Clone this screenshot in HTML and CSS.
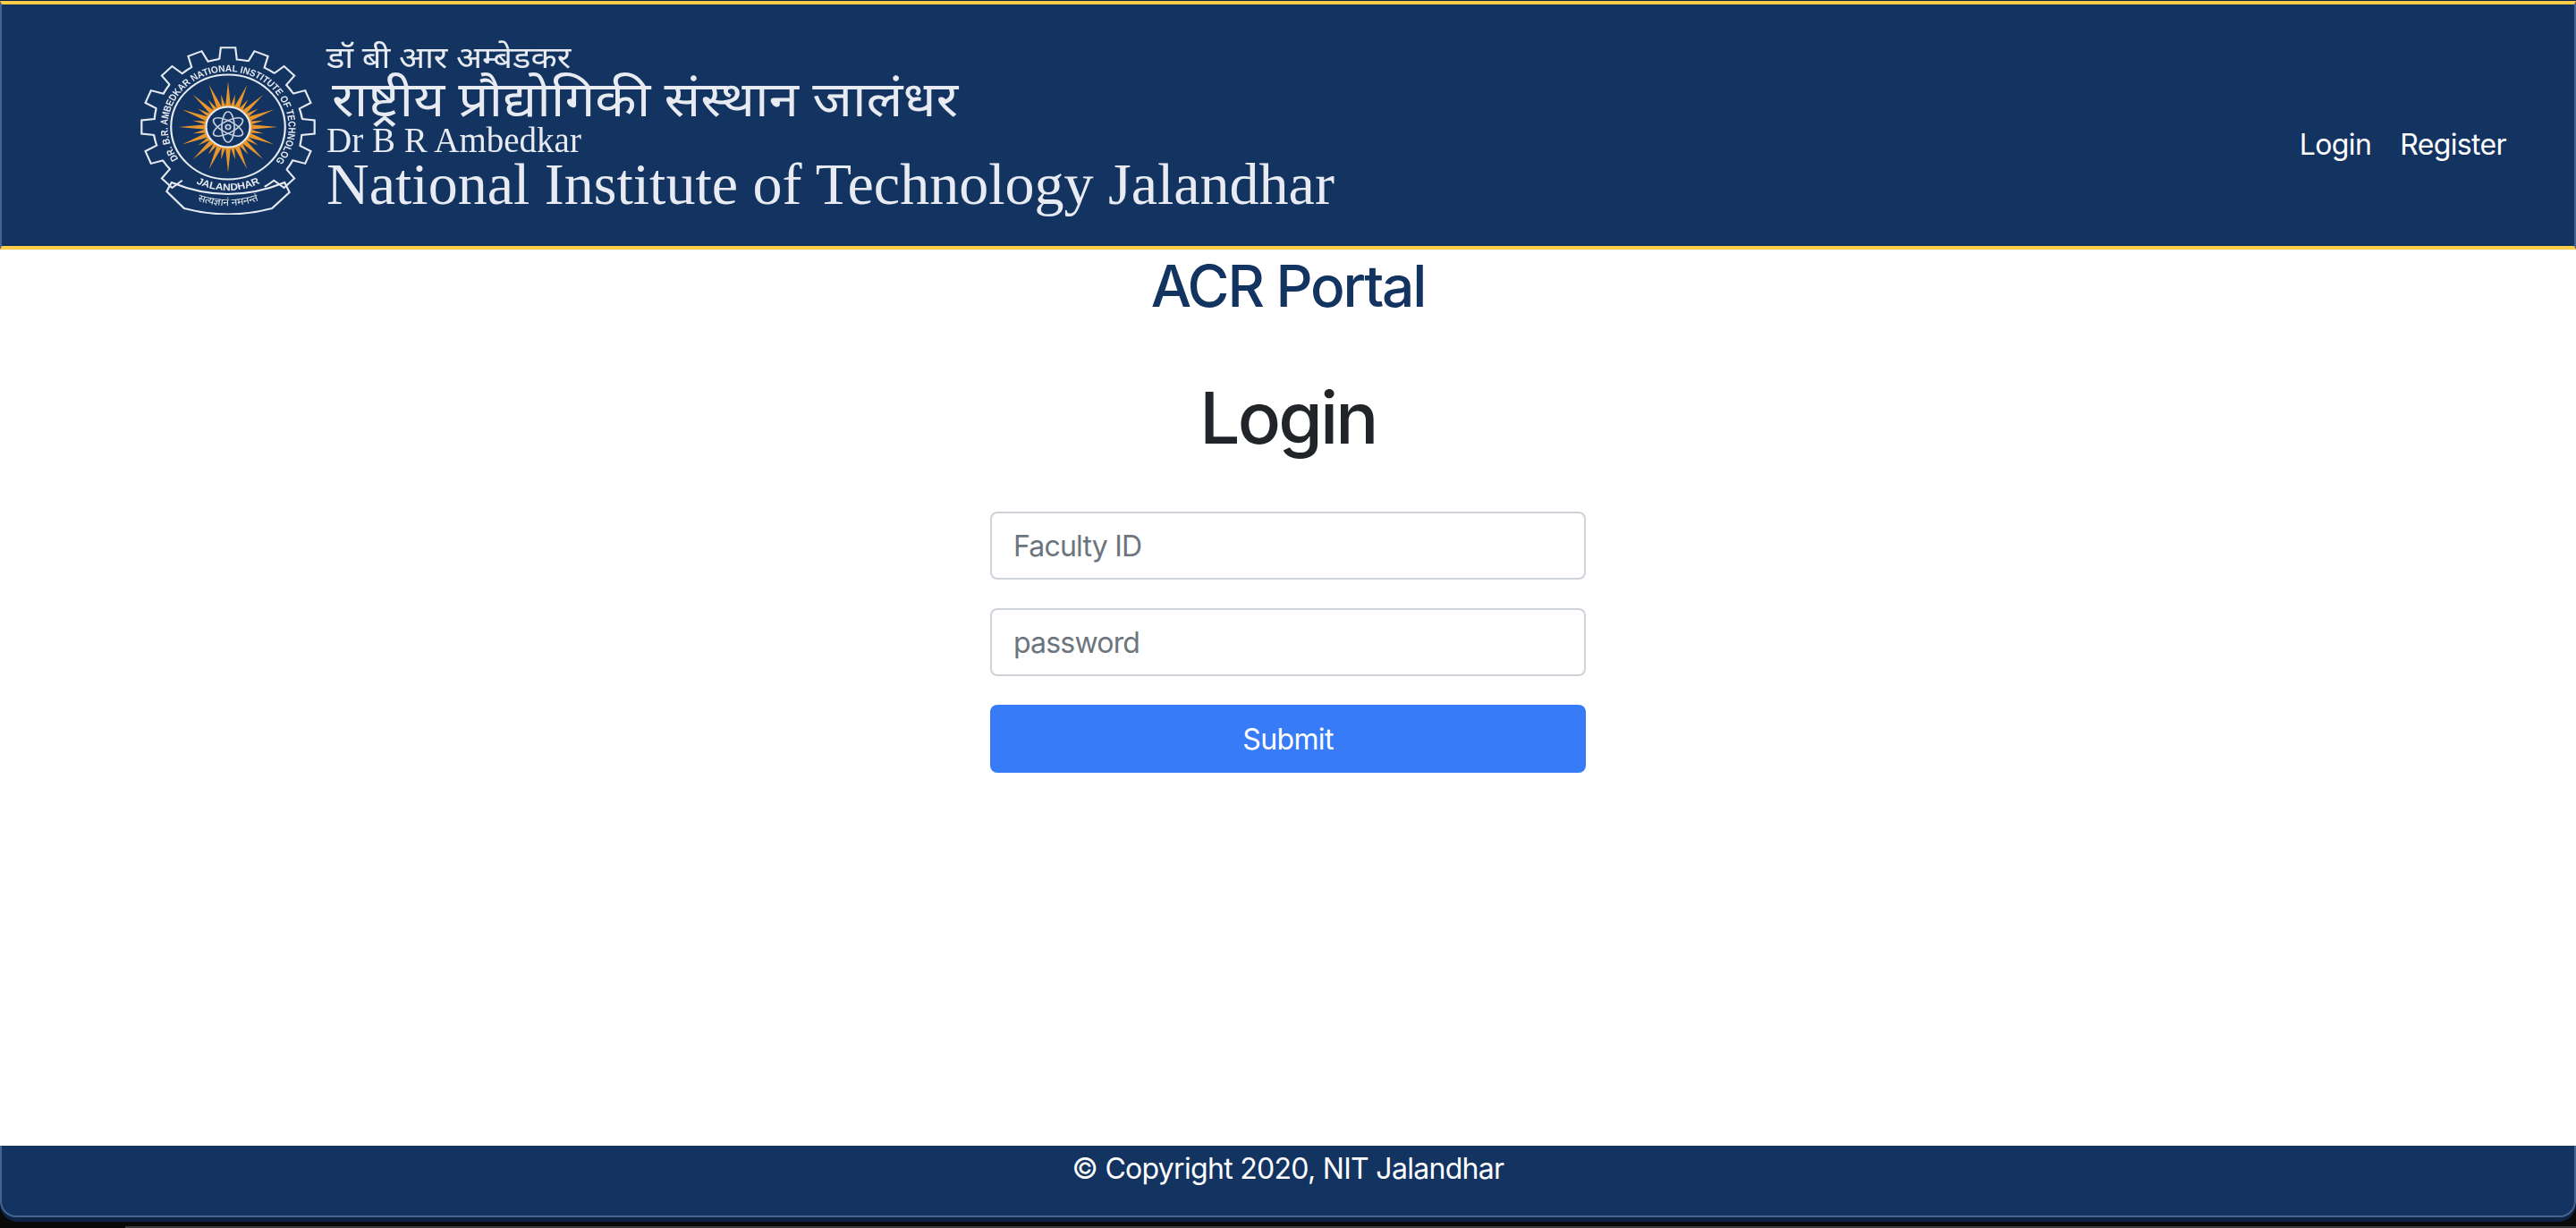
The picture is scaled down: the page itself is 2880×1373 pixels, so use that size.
FILE: index.html
```html
<!DOCTYPE html>
<html lang="en">
<head>
    <title>ACR Portal</title>
    <link rel="stylesheet" href="styles.css">
</head>
<body>
<div class="window">
    <header class="topbar">
        <div class="brand">
            <svg class="emblem" viewBox="-100 -97 200 195" width="200" height="195">
                <defs>
                    <path id="tooth" d="M-9 -75.5 L-7.5 -88.7 L7.5 -88.7 L9 -75.5 A76 76 0 0 1 20.8 -73.7"/>
                    <path id="ray" d="M-3 -20 L0 -51 L3 -20 Z"/>
                    <path id="shortray" d="M-2.5 -20 L0 -37 L2.5 -20 Z"/>
                    <path id="ringtext" d="M-50.8 35.6 A62 62 0 1 1 48.9 38.1"/>
                    <path id="citytext" d="M-38 60 A71 71 0 0 0 38 60"/>
                    <path id="mottotext" d="M-48 75 Q0 101 48 75"/>
                </defs>
                <g transform="scale(1.09 1)">
                    <g class="gear">
                        <use href="#tooth" transform="rotate(-135)"/>
                        <use href="#tooth" transform="rotate(-112.5)"/>
                        <use href="#tooth" transform="rotate(-90)"/>
                        <use href="#tooth" transform="rotate(-67.5)"/>
                        <use href="#tooth" transform="rotate(-45)"/>
                        <use href="#tooth" transform="rotate(-22.5)"/>
                        <use href="#tooth"/>
                        <use href="#tooth" transform="rotate(22.5)"/>
                        <use href="#tooth" transform="rotate(45)"/>
                        <use href="#tooth" transform="rotate(67.5)"/>
                        <use href="#tooth" transform="rotate(90)"/>
                        <use href="#tooth" transform="rotate(112.5)"/>
                        <use href="#tooth" transform="rotate(135)"/>
                        <path d="M-58 62 Q0 88 58 62 L63 73 L45 91 Q0 104 -45 91 L-63 72 Z"/>
                        <ellipse cx="0" cy="0" rx="58.5" ry="58.5"/>
                    </g>
                    <g class="sun">
                        <circle r="25"/>
                        <use href="#ray"/>
                        <use href="#ray" transform="rotate(22.5)"/>
                        <use href="#ray" transform="rotate(45)"/>
                        <use href="#ray" transform="rotate(67.5)"/>
                        <use href="#ray" transform="rotate(90)"/>
                        <use href="#ray" transform="rotate(112.5)"/>
                        <use href="#ray" transform="rotate(135)"/>
                        <use href="#ray" transform="rotate(157.5)"/>
                        <use href="#ray" transform="rotate(180)"/>
                        <use href="#ray" transform="rotate(202.5)"/>
                        <use href="#ray" transform="rotate(225)"/>
                        <use href="#ray" transform="rotate(247.5)"/>
                        <use href="#ray" transform="rotate(270)"/>
                        <use href="#ray" transform="rotate(292.5)"/>
                        <use href="#ray" transform="rotate(315)"/>
                        <use href="#ray" transform="rotate(337.5)"/>
                        <use href="#shortray" transform="rotate(11.25)"/>
                        <use href="#shortray" transform="rotate(33.75)"/>
                        <use href="#shortray" transform="rotate(56.25)"/>
                        <use href="#shortray" transform="rotate(78.75)"/>
                        <use href="#shortray" transform="rotate(101.25)"/>
                        <use href="#shortray" transform="rotate(123.75)"/>
                        <use href="#shortray" transform="rotate(146.25)"/>
                        <use href="#shortray" transform="rotate(168.75)"/>
                        <use href="#shortray" transform="rotate(191.25)"/>
                        <use href="#shortray" transform="rotate(213.75)"/>
                        <use href="#shortray" transform="rotate(236.25)"/>
                        <use href="#shortray" transform="rotate(258.75)"/>
                        <use href="#shortray" transform="rotate(281.25)"/>
                        <use href="#shortray" transform="rotate(303.75)"/>
                        <use href="#shortray" transform="rotate(326.25)"/>
                        <use href="#shortray" transform="rotate(348.75)"/>
                    </g>
                    <circle class="atom-disc" r="22.5"/>
                    <g class="atom">
                        <ellipse rx="6.5" ry="17"/>
                        <ellipse rx="6.5" ry="17" transform="rotate(60)"/>
                        <ellipse rx="6.5" ry="17" transform="rotate(-60)"/>
                        <circle r="2.5"/>
                    </g>
                    <text class="ring-label"><textPath href="#ringtext" textLength="280" lengthAdjust="spacingAndGlyphs">DR. B.R. AMBEDKAR NATIONAL INSTITUTE OF TECHNOLOGY</textPath></text>
                    <text class="city-label"><textPath href="#citytext" startOffset="50%">JALANDHAR</textPath></text>
                    <text class="motto-label" lang="hi"><textPath href="#mottotext" startOffset="50%">सत्यज्ञानं  नमनन्तं</textPath></text>
                </g>
            </svg>
            <div class="brand-text">
                <div class="line-hi-small" lang="hi">डॉ बी आर अम्बेडकर</div>
                <div class="line-hi" lang="hi">राष्ट्रीय प्रौद्योगिकी संस्थान जालंधर</div>
                <div class="line-en-small">Dr B R Ambedkar</div>
                <div class="line-en">National Institute of Technology Jalandhar</div>
            </div>
        </div>
        <nav class="nav">
            <a href="#">Login</a>
            <a href="#">Register</a>
        </nav>
    </header>
    <main class="content">
        <h2 class="portal">ACR Portal</h2>
        <h1 class="title">Login</h1>
        <form class="login-form">
            <input type="text" placeholder="Faculty ID">
            <input type="password" placeholder="password">
            <button type="submit">Submit</button>
        </form>
    </main>
    <footer class="footer">© Copyright 2020, NIT Jalandhar</footer>
</div>
<div class="desk-strip"></div>
</body>
</html>
```
FILE: styles.css
```css
* {
    box-sizing: border-box;
}
html, body {
    margin: 0;
    height: 100%;
    background: #0a0a0a;
}
body {
    font-family: Inter, "Liberation Sans", sans-serif;
    font-size: 32px;
    overflow: hidden;
}
.window {
    height: 1366px;
    padding: 1px 0 5px;
    background: #0e2345;
    display: flex;
    flex-direction: column;
    border-radius: 0 0 20px 20px;
    overflow: hidden;
}
.desk-strip {
    height: 2px;
    margin: 5px 0 0 140px;
    background: #3d3d3d;
}
.topbar {
    height: 278px;
    flex: none;
    background: #133361;
    border-top: 4px solid #fdcd45;
    border-bottom: 4px solid #fdcd45;
    border-left: 2px solid #44648f;
    border-right: 2px solid #44648f;
    display: flex;
    justify-content: space-between;
    padding: 40px 76px 0 153px;
}
.brand {
    display: flex;
}
.emblem {
    flex: none;
    filter: blur(0.5px);
}
.gear, .gear use {
    fill: none;
    stroke: #e6ebf2;
    stroke-width: 2;
}
.sun {
    fill: #e8952c;
}
.atom-disc {
    fill: #133361;
    stroke: #e6ebf2;
    stroke-width: 2;
}
.atom {
    fill: none;
    stroke: #c3cede;
    stroke-width: 1.6;
}
.ring-label, .city-label {
    fill: #e6ebf2;
    font-family: "Liberation Sans", sans-serif;
    font-weight: bold;
}
.ring-label {
    font-size: 10.5px;
}
.city-label {
    font-size: 11px;
    text-anchor: middle;
}
.motto-label {
    fill: #e6ebf2;
    font-family: "Noto Sans", sans-serif;
    font-size: 11px;
    text-anchor: middle;
}
.brand-text {
    margin-left: 10px;
    color: #e8ecf2;
    font-family: "Liberation Serif", "Noto Sans", serif;
    white-space: nowrap;
    filter: blur(0.4px);
}
.line-hi-small {
    font-size: 34px;
    line-height: 40px;
    transform: scaleX(1.12);
    transform-origin: left;
}
.line-hi {
    font-size: 54px;
    line-height: 54px;
    margin-left: 6px;
    transform: scaleX(1.117);
    transform-origin: left;
}
.line-en-small {
    font-size: 39px;
    line-height: 36px;
}
.line-en {
    font-size: 66px;
    line-height: 62px;
}
.nav {
    display: flex;
    gap: 32px;
    padding-top: 97px;
    letter-spacing: -0.02em;
}
.nav a {
    color: #fff;
    text-decoration: none;
}
.content {
    flex: 1;
    background: #fff;
    display: flex;
    flex-direction: column;
    align-items: center;
    padding-top: 2px;
}
.portal {
    margin: 0;
    font-size: 64px;
    font-weight: 500;
    color: #133361;
    letter-spacing: -0.034em;
}
.title {
    margin: 60px 0 57px;
    font-size: 80px;
    font-weight: 500;
    color: #212529;
    letter-spacing: -0.035em;
}
.login-form {
    width: 666px;
    display: flex;
    flex-direction: column;
    gap: 32px;
}
.login-form input {
    height: 76px;
    padding: 0 24px;
    font: inherit;
    letter-spacing: -0.025em;
    border: 2px solid #ced4da;
    border-radius: 8px;
}
.login-form input::placeholder {
    color: #6c757d;
    opacity: 1;
}
.login-form button {
    height: 76px;
    font: inherit;
    letter-spacing: -0.02em;
    color: #fff;
    background: #377bf6;
    border: 0;
    border-radius: 8px;
}
.footer {
    height: 80px;
    flex: none;
    padding-top: 6px;
    background: #133361;
    color: #fff;
    text-align: center;
    letter-spacing: -0.022em;
    border: 2px solid #44648f;
    border-top: 0;
    border-radius: 0 0 18px 18px;
}
```
